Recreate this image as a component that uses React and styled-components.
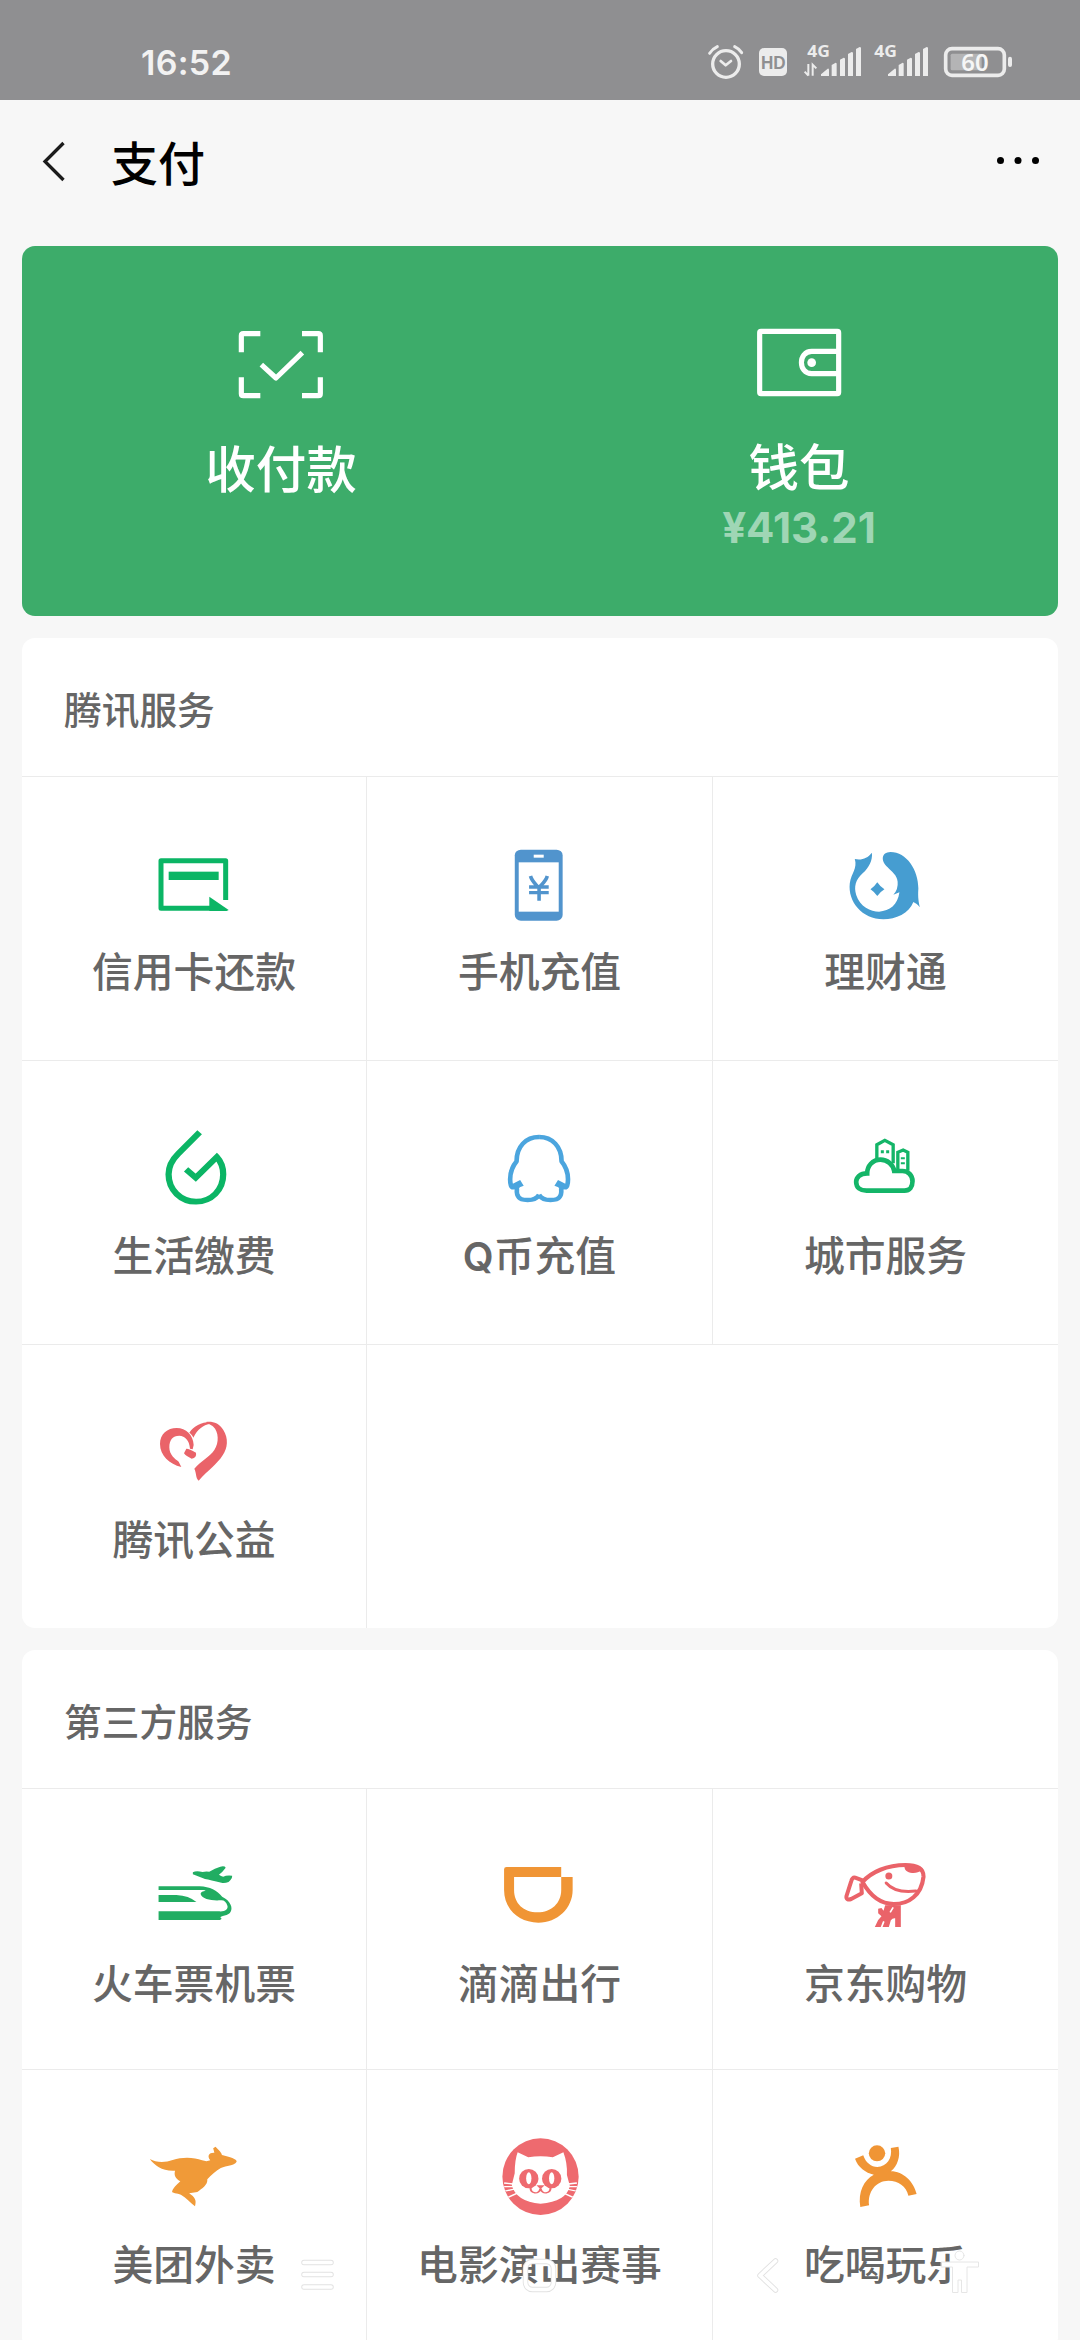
import React from "react";
import styled, { createGlobalStyle } from "styled-components";

const GlobalStyle = createGlobalStyle`
  * { box-sizing: border-box; }
  body {
    margin: 0;
    background: #f7f7f7;
    font-family: "Noto Sans CJK SC", "Noto Sans", sans-serif;
  }
`;

const Screen = styled.div`
  width: 1080px;
  height: 2340px;
  overflow: hidden;
  background: #f7f7f7;
  display: flex;
  flex-direction: column;
`;

const StatusBar = styled.header`
  height: 100px;
  flex: none;
  background: #8f8f91;
  display: flex;
  justify-content: space-between;
  padding: 42px 67px 0 141px;
`;

const Clock = styled.time`
  font: 600 34px/41px Inter, sans-serif;
  letter-spacing: 0.3px;
  color: #f2f2f2;
`;

const StatusIcons = styled.div`
  display: flex;
`;

const StatusIcon = styled.svg`
  display: block;
  height: 40px;
  width: ${(p) => p.$w}px;
  margin-left: ${(p) => p.$gap || 0}px;
  color: #ececec;
  overflow: visible;
`;

const TitleBar = styled.nav`
  height: 146px;
  flex: none;
  display: flex;
  align-items: flex-start;
  padding: 38px 39px 0 40px;
`;

const BackIcon = styled.svg`
  width: 28px;
  height: 48px;
`;

const Title = styled.h1`
  margin: -2px 0 0 43px;
  flex: 1;
  font-size: 47px;
  line-height: 50px;
  font-weight: 500;
  color: #000;
`;

const MoreIcon = styled.svg`
  width: 48px;
  height: 46px;
`;

const PayCard = styled.section`
  height: 370px;
  flex: none;
  margin: 0 22px;
  border-radius: 13px;
  background: #3dac6a;
  display: grid;
  grid-template-columns: 1fr 1fr;
  color: #fff;
`;

const PayItem = styled.div`
  display: flex;
  flex-direction: column;
  align-items: center;
  padding-top: ${(p) => p.$top}px;
`;

const PayIcon = styled.svg`
  display: block;
  width: 90px;
  height: 76px;
`;

const PayLabel = styled.div`
  margin-top: 33px;
  font-size: 50.5px;
  line-height: 60px;
  font-weight: 500;
`;

const Balance = styled.div`
  font: 700 42px/50px Inter, sans-serif;
  margin-top: 9px;
  color: #9fd6b5;
`;

const Card = styled.section`
  flex: none;
  margin: 22px 22px 0;
  border-radius: 13px;
  background: #fff;
`;

const CardTitle = styled.h2`
  margin: 0;
  height: 138px;
  padding: 4px 0 0 42px;
  font-size: 37.7px;
  line-height: 132px;
  font-weight: 500;
  color: #666;
`;

const Grid = styled.div`
  display: grid;
  grid-template-columns: 345px 346px 345px;
  grid-auto-rows: ${(p) => p.$row}px;
`;

const Cell = styled.div`
  border-top: 1px solid #ebebeb;
  border-right: ${(p) => (p.$last ? "none" : "1px solid #ebebeb")};
  padding-top: 62px;
  display: flex;
  flex-direction: column;
  align-items: center;
`;

const EmptyCell = styled.div`
  grid-column: span 2;
  border-top: 1px solid #ebebeb;
`;

const Glyph = styled.svg`
  display: block;
  flex: none;
  width: 90px;
  height: 90px;
  overflow: visible;
`;

const Label = styled.div`
  margin-top: 17px;
  font-size: 40.8px;
  line-height: 48px;
  font-weight: 500;
  color: #666;
  white-space: nowrap;
`;

const Latin = styled.span`
  font-family: Inter, sans-serif;
  font-weight: 600;
  font-size: 40px;
  line-height: 0;
`;

const NavOverlay = styled.svg`
  position: absolute;
  left: 0;
  top: 2240px;
  width: 1080px;
  height: 64px;
`;

const CreditCard = () => (
  <Glyph viewBox="207 57 270 270" fill="#0bb565">
    <path d="M437 240V122H243V265H395" fill="none" stroke="#0bb565" strokeWidth="15" strokeLinejoin="round" />
    <path d="M388 230L446 270L440 273H388Z" />
    <rect x="266" y="155" width="150" height="25" />
  </Glyph>
);

const Phone = () => (
  <Glyph viewBox="152.6 57 252 270" preserveAspectRatio="none">
    <rect x="208" y="89" width="134" height="213" rx="17" fill="#5194cd" />
    <rect x="219" y="127" width="112" height="148" fill="#fff" />
    <rect x="261" y="104" width="28" height="9" fill="#fff" />
    <path d="M252 168C256 185 268 193 275 203C283 193 295 185 299 168M276 200V242M248 201H303M248 218H303" fill="none" stroke="#5194cd" strokeWidth="10" />
  </Glyph>
);

const Wealth = () => (
  <Glyph viewBox="1121.4 57 252 270" preserveAspectRatio="none" fill="#469dd1">
    <path d="M1208 98C1210 122 1200 142 1182 160C1162 180 1157 200 1164 225C1174 260 1205 275 1228 275C1258 273 1280 255 1285 217L1268 224Q1282 208 1280 185C1278 165 1264 156 1252 142C1232 122 1234 97 1260 96C1305 96 1338 150 1338 205C1337 225 1337 237 1342 262C1337 253 1330 250 1324 246C1312 280 1275 298 1240 298C1180 298 1140 245 1146 190C1150 160 1168 145 1160 117C1180 121 1195 115 1208 98Z" />
    <path d="M1223 187Q1231 200 1243 208Q1231 216 1223 228Q1215 216 1204 208Q1215 200 1223 187Z" />
  </Glyph>
);

const Drop = () => (
  <Glyph viewBox="193.2 39 252 270" preserveAspectRatio="none" fill="none" stroke="#0bb565" strokeWidth="17.500">
    <path d="M335 67L275 131C255 152 248 170 248 193C248 240 282 275 325 275C368 275 401 240 401 193C401 172 395 155 383 141L324 203L297 178" />
  </Glyph>
);

const Penguin = () => {
  const half = (
    <>
      <path d="M1284 81C1247 81 1221 110 1221 154C1207 172 1203 190 1203 208C1203 224 1206 233 1212 232" />
      <path d="M1222 236Q1221 246 1223 254C1228 270 1240 270 1252 270C1270 270 1280 262 1284 254" />
      <path d="M1205 224L1231 210L1241 227L1230 232L1226 240L1212 238Z" fill="#4ba5de" stroke="none" />
    </>
  );
  return (
    <Glyph viewBox="1160.6 39 252 270" preserveAspectRatio="none" fill="none" stroke="#4ba5de" strokeWidth="13" strokeLinejoin="round">
      {half}
      <g transform="translate(2568 0) scale(-1 1)">{half}</g>
    </Glyph>
  );
};

const City = () => (
  <Glyph viewBox="181.5 39 270 270" fill="none" stroke="#14b568">
    <path d="M289 152V104L313 91L338 104V160M352 180V127L368 120L382 127V182" strokeWidth="10" />
    <path d="M260 190C238 190 227 203 227 216C227 233 240 242 258 242H372C388 242 396 230 396 214C396 195 382 183 366 183H341C338 163 320 149 300 149C276 149 260 168 260 190Z" strokeWidth="14" />
    <path d="M301 125h9M317 125h9" strokeWidth="9" />
    <path d="M361 145h12M361 160h12" strokeWidth="6" />
  </Glyph>
);

const Heart = () => (
  <Glyph viewBox="207 51 270 270" fill="#ea6369">
    <path d="M304 231C268 222 240 197 240 162C240 132 262 114 290 114C318 114 340 135 341 165L338 178L330 176C328 150 315 138 298 137C278 137 268 150 268 172C268 195 286 208 296 215Z" />
    <path d="M328 128C342 108 362 97 392 96Q397 98 388 102C372 104 352 118 340 143C338 137 333 132 328 128Z" />
    <path d="M378 96C395 93 418 98 430 120C446 145 443 175 428 196C412 222 385 240 356 272C346 262 350 250 343 236C360 215 390 200 403 180C418 157 416 125 400 110C392 103 380 101 378 96Z" />
    <path d="M319 176Q326 175 348 188Q351 203 335 206Q318 199 312 190Z" />
  </Glyph>
);

const Train = () => (
  <Glyph viewBox="193.2 33 252 270" preserveAspectRatio="none" fill="#21ad62">
    <path d="M220 139H335C364 140 384 152 398 170C422 182 430 205 420 218C410 230 385 226 397 236L392 240H220V214H388C406 216 415 208 413 198C410 186 403 180 394 181C370 183 342 178 338 163C337 156 345 153 352 152C345 149 335 150 330 150H220Z" />
    <path d="M220 165H270Q305 167 326 186H220Z" />
    <path d="M316 97Q325 91 343 96Q352 93 362 95Q378 84 393 80Q405 77 408 83Q400 95 389 104Q395 108 401 110Q410 105 426 107Q427 115 416 126Q405 130 396 128Q365 120 350 117Q330 109 316 103Z" />
  </Glyph>
);

const Didi = () => (
  <Glyph viewBox="1160.6 33 252 270" preserveAspectRatio="none" fill="#f09535">
    <path d="M1193 81H1346V111H1214V150C1214 190 1240 217 1280 217C1318 217 1346 190 1346 150V111H1378V150C1378 205 1335 248 1282 248C1225 248 1186 205 1186 150V88Q1186 81 1193 81Z" />
  </Glyph>
);

const Joy = () => (
  <Glyph viewBox="181.5 63 270 270" fill="none" stroke="#ea6369" strokeLinejoin="round">
    <path d="M246 156C272 126 320 105 375 105C410 105 430 115 429 140C423 195 385 222 340 222C300 222 268 195 246 156Z" strokeWidth="12.500" />
    <path d="M248 152L224 143C218 141 214 147 212 154L198 198C196 208 203 210 212 207L244 190L242 160" strokeWidth="12" />
    <path d="M372 106C410 100 430 112 430 127C420 118 412 131 395 129C380 128 370 120 372 106Z" fill="#ea6369" stroke="none" />
    <circle cx="325" cy="138" r="10.500" fill="#ea6369" stroke="none" />
    <path d="M317 159C335 180 365 188 406 183" strokeWidth="9" strokeLinecap="round" />
    <path d="M314 226H361V291H344V265Q336 264 331 271L325 291H283L293 270L303 259L293 250V236L303 234L309 242Z" fill="#ea6369" stroke="none" />
    <path d="M303 292L310 274M329 247L338 232" stroke="#fff" strokeWidth="5" />
  </Glyph>
);

const Kangaroo = () => (
  <Glyph viewBox="117.6 66 153.4 270" preserveAspectRatio="none" fill="#f09a38">
    <path d="M119 147C130 158 145 158 158 150C175 140 195 142 208 151Q216 156 222 151C216 137 220 127 229 128L227 115L231 110C238 122 241 128 242 135C255 140 268 148 267 155C262 168 250 166 240 174C232 182 224 194 217 208C218 225 208 236 200 246L186 250C196 262 199 270 196 289C188 278 182 265 172 254C166 250 156 250 157 244C160 230 168 220 171 214C162 205 160 195 162 182C140 184 128 168 119 147Z" />
  </Glyph>
);

const Cat = () => {
  const whiskers = <path d="M722 219L737 222M722 230H738M724 243L740 237M729 262L744 250" strokeWidth="4" />;
  return (
    <Glyph viewBox="706.4 66 153.4 270" preserveAspectRatio="none" fill="#ee6a6f">
      <ellipse cx="784" cy="200" rx="65" ry="115" />
      <path d="M745 127L763 142Q784 136 805 142L823 127Q830 160 829 195L834 228Q828 275 784 281Q742 275 735 225L740 190Q740 150 745 127Z" fill="#fff" />
      <ellipse cx="764" cy="206" rx="16.5" ry="29" />
      <ellipse cx="803" cy="206" rx="16.5" ry="29" />
      <ellipse cx="764" cy="205" rx="4.5" ry="18" fill="#fff" />
      <ellipse cx="803" cy="205" rx="4.5" ry="18" fill="#fff" />
      <path d="M777 226H791L784 238Z" />
      <path d="M767 234C767 250 781 256 784 236C787 256 801 250 801 234" fill="none" stroke="#ee6a6f" strokeWidth="3.6" />
      <g fill="none" stroke="#fff">
        {whiskers}
        <g transform="translate(1568 0) scale(-1 1)">{whiskers}</g>
      </g>
    </Glyph>
  );
};

const Dancer = () => (
  <Glyph viewBox="1296.1 66 153.4 270" preserveAspectRatio="none" fill="#f09535">
    <ellipse cx="1357.5" cy="130" rx="14" ry="24" />
    <path d="M1320 146L1334 136C1338 158 1348 171 1358 171C1374 170 1384 145 1381 114L1394 110C1398 140 1392 168 1381 184C1402 184 1420 215 1425 252L1411 257C1407 228 1394 212 1377 212C1356 212 1341 245 1344 286L1329 291C1325 245 1335 210 1352 194C1338 188 1325 172 1320 146Z" />
  </Glyph>
);

const tencent = [
  ["信用卡还款", CreditCard],
  ["手机充值", Phone],
  ["理财通", Wealth],
  ["生活缴费", Drop],
  ["Q币充值", Penguin],
  ["城市服务", City],
  ["腾讯公益", Heart],
];

const partners = [
  ["火车票机票", Train],
  ["滴滴出行", Didi],
  ["京东购物", Joy],
  ["美团外卖", Kangaroo],
  ["电影演出赛事", Cat],
  ["吃喝玩乐", Dancer],
];

const ServiceName = ({ name }) =>
  /^[A-Z]/.test(name) ? (
    <Label>
      <Latin>{name[0]}</Latin>
      {name.slice(1)}
    </Label>
  ) : (
    <Label>{name}</Label>
  );

const Services = ({ title, items, row, children }) => (
  <Card>
    <CardTitle>{title}</CardTitle>
    <Grid $row={row}>
      {items.map(([name, Icon], i) => (
        <Cell key={name} $last={i % 3 === 2}>
          <Icon />
          <ServiceName name={name} />
        </Cell>
      ))}
      {children}
    </Grid>
  </Card>
);

const Bars = ({ x }) => (
  <path
    transform={`translate(${x} 0)`}
    fill="currentColor"
    d="M0 168V163L20 146Q24 144 24 150V168ZM32 168V135L44 128Q47 128 47 132V168ZM57 168V119L68 113Q72 113 72 117V168ZM81 168V102L92 96Q96 96 96 100V168ZM105 168V87L116 81Q120 81 120 85V168Z"
  />
);

const NetLabel = ({ x }) => (
  <text x={x} y="111" fontFamily="Noto Sans, sans-serif" fontWeight="700" fontSize="47" textLength="68" lengthAdjust="spacingAndGlyphs" fill="currentColor">
    4G
  </text>
);

const navShapes = (
  <>
    <path d="M304 22.5H331M304 34.5H331M304 47H331" />
    <rect x="525.500" y="21.500" width="28" height="28" rx="7" />
    <path d="M775.500 21L760 35.500L775.500 50" />
  </>
);

export default function App() {
  return (
    <Screen>
      <GlobalStyle />
      <StatusBar>
        <Clock>16:52</Clock>
        <StatusIcons>
          <StatusIcon $w={37} viewBox="81 66 111 120">
            <g fill="none" stroke="currentColor" strokeLinecap="round" strokeLinejoin="round">
              <circle cx="138" cy="132" r="40" strokeWidth="10" />
              <path d="M122 123L137 136L153 123" strokeWidth="8" />
              <path d="M89 100Q97 87 112 80M185 98Q177 86 164 80" strokeWidth="9" />
            </g>
          </StatusIcon>
          <StatusIcon $w={30} $gap={14} viewBox="234 66 90 120">
            <rect x="237" y="84" width="84" height="84" rx="15" fill="currentColor" />
            <text x="243" y="147" fontFamily="Liberation Sans, sans-serif" fontWeight="700" fontSize="53" textLength="74" lengthAdjust="spacingAndGlyphs" fill="#8f8f91">
              HD
            </text>
          </StatusIcon>
          <StatusIcon $w={60} $gap={15} viewBox="369 66 180 120">
            <NetLabel x={382} />
            <path d="M385 132V167M374 155L385 167M398 167V134L409 145" fill="none" stroke="currentColor" strokeWidth="6" />
            <Bars x={423} />
          </StatusIcon>
          <StatusIcon $w={56} $gap={10} viewBox="579 66 168 120">
            <NetLabel x={583} />
            <Bars x={624} />
          </StatusIcon>
          <StatusIcon $w={70} $gap={14} viewBox="789 66 210 120">
            <rect x="797" y="86" width="176" height="80" rx="19" fill="none" stroke="currentColor" strokeWidth="11" />
            <rect x="812" y="101" width="93" height="50" rx="5" fill="#b4b4b5" />
            <rect x="984" y="110" width="12" height="31" rx="6" fill="currentColor" />
            <text x="844" y="152" fontFamily="Noto Sans, sans-serif" fontWeight="600" fontSize="68" textLength="82" lengthAdjust="spacingAndGlyphs" fill="#f6f6f6">
              60
            </text>
          </StatusIcon>
        </StatusIcons>
      </StatusBar>

      <TitleBar>
        <BackIcon viewBox="0 0 28 48">
          <path d="M23.500 5L5 23.500L23.500 42" fill="none" stroke="#1c1c1c" strokeWidth="3.300" />
        </BackIcon>
        <Title>支付</Title>
        <MoreIcon viewBox="0 0 48 46">
          <circle cx="7.500" cy="22.500" r="3.500" />
          <circle cx="25" cy="22.500" r="3.500" />
          <circle cx="42.500" cy="22.500" r="3.500" />
        </MoreIcon>
      </TitleBar>

      <PayCard>
        <PayItem $top={81}>
          <PayIcon viewBox="166 81 270 228">
            <path d="M239 101H188Q182 101 182 107V157M364 101H413Q419 101 419 107V157M182 232V281Q182 287 188 287H239M364 287H413Q419 287 419 281V232M242 194L286 234L365 158" fill="none" stroke="#fff" strokeWidth="15.500" strokeLinejoin="round" />
          </PayIcon>
          <PayLabel>收付款</PayLabel>
        </PayItem>
        <PayItem $top={79}>
          <PayIcon viewBox="224 75 270 228">
            <g fill="none" stroke="#fff" strokeWidth="15.500">
              <rect x="241" y="94" width="237" height="187" rx="4" />
              <path d="M474 154H397C356 154 356 221 397 221H474" />
            </g>
            <circle cx="397" cy="188" r="13" fill="#fff" />
          </PayIcon>
          <PayLabel>钱包</PayLabel>
          <Balance>¥413.21</Balance>
        </PayItem>
      </PayCard>

      <Services title="腾讯服务" items={tencent} row={284}>
        <EmptyCell />
      </Services>
      <Services title="第三方服务" items={partners} row={281} />

      <NavOverlay viewBox="0 0 1080 64" fill="none" strokeLinecap="round" strokeLinejoin="round">
        <g stroke="#e2e2e2" strokeWidth="5.500">{navShapes}</g>
        <g stroke="#fff" strokeWidth="3.700">{navShapes}</g>
        <g fill="#fff" stroke="#e6e6e6">
          <circle cx="959.500" cy="15.500" r="4.500" />
          <path d="M941.500 22H978.500V27H967V52.500H961.500V40H958V52.500H952.500V27H941.500Z" />
        </g>
      </NavOverlay>
    </Screen>
  );
}
